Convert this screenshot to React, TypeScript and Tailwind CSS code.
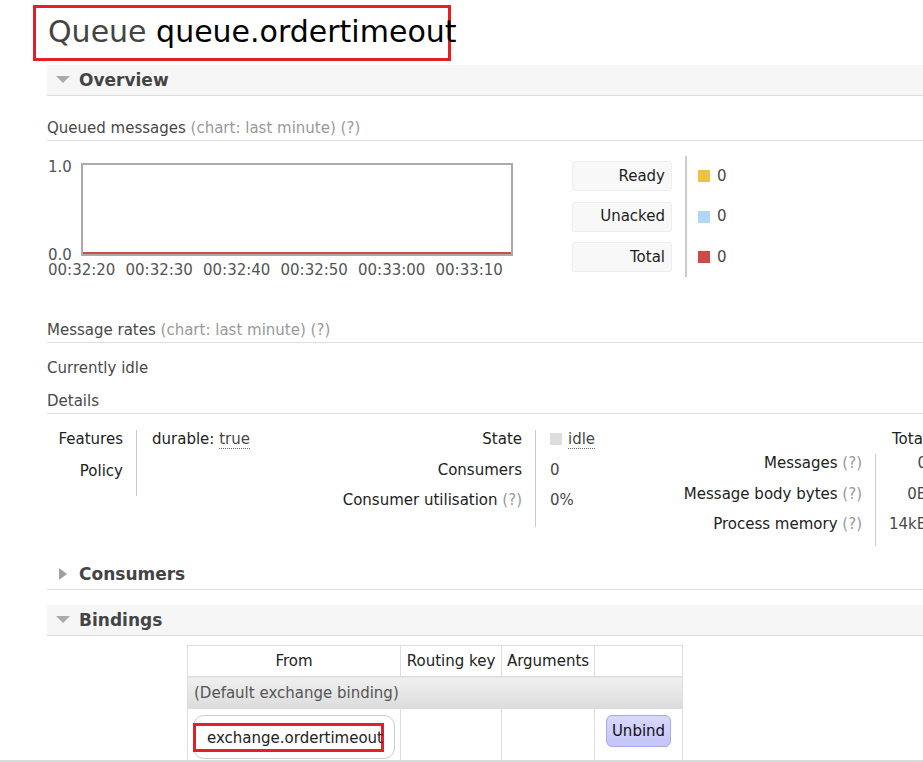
import React from "react";

function Tri({ open }: { open: boolean }) {
  return (
    <div className="w-[32px] flex justify-center">
      {open ? (
        <svg width="14" height="8" viewBox="0 0 14 8">
          <polygon points="0,0 14,0 7,7" fill="#aaa" />
        </svg>
      ) : (
        <svg width="8" height="12" viewBox="0 0 8 12">
          <polygon points="0,0 8,6 0,12" fill="#a0a0a0" />
        </svg>
      )}
    </div>
  );
}

function Section({ title, open, className = "" }: { title: string; open: boolean; className?: string }) {
  return (
    <div
      className={`h-[31px] flex items-center border-b border-[#ddd] ${open ? "bg-[#f6f6f6]" : ""} ${className}`}
    >
      <Tri open={open} />
      <span className="text-[17px] font-bold text-[#444] leading-[20px]">{title}</span>
    </div>
  );
}

function H3({ children, className = "" }: { children: React.ReactNode; className?: string }) {
  return (
    <div className={`leading-[18px] pb-[3px] border-b border-[#ddd] text-[#484848] ${className}`}>{children}</div>
  );
}

const Help = () => <span className="text-[#999]">(?)</span>;

const ticks = ["00:32:20", "00:32:30", "00:32:40", "00:32:50", "00:33:00", "00:33:10"];

const legend = [
  { label: "Ready", color: "bg-[#edc240]" },
  { label: "Unacked", color: "bg-[#afd8f8]" },
  { label: "Total", color: "bg-[#cb4b4b]" },
];

export default function App() {
  return (
    <div className="w-[923px] h-[762px] overflow-hidden flex flex-col bg-white text-[15px] text-[#222] font-['DejaVu_Sans',Verdana,sans-serif]">
      <div className="flex-1 overflow-hidden">
        {/* Title */}
        <div className="ml-[33px] mt-[5px] w-[418px] h-[56px] border-[3px] border-[#e32028] pl-[12px] pt-[6px]">
          <h1 className="text-[30px] leading-[36px] whitespace-nowrap text-[#444]">
            Queue <span className="text-black">queue.ordertimeout</span>
          </h1>
        </div>

        <div className="pl-[47px]">
          <Section title="Overview" open className="mt-[4px]" />

          <H3 className="mt-[23px]">
            Queued messages <span className="text-[#999]">(chart: last minute) (?)</span>
          </H3>

          {/* Chart + legend */}
          <div className="mt-[15px] flex items-start">
            <div className="relative w-[473px] h-[122px] shrink-0 text-[#545454] leading-[14px]">
              <div className="absolute left-[34px] top-[7px] w-[432px] h-[93px] border-2 border-[#aaa] flex flex-col justify-end">
                <div className="h-[2px] bg-[#cb4b4b]" />
              </div>
              <span className="absolute left-[1px] top-[4px]">1.0</span>
              <span className="absolute left-[1px] top-[92px]">0.0</span>
              <div className="absolute left-[1px] top-[107px] flex">
                {ticks.map((t) => (
                  <span key={t} className="w-[77.5px] whitespace-nowrap">
                    {t}
                  </span>
                ))}
              </div>
            </div>

            <div className="ml-[52px] flex">
              <div className="flex flex-col gap-[10.5px] pt-[5px]">
                {legend.map((l) => (
                  <div
                    key={l.label}
                    className="w-[100px] h-[30px] bg-[#f8f8f8] border border-[#eee] rounded-[3px] flex items-center justify-end pr-[6px]"
                  >
                    {l.label}
                  </div>
                ))}
              </div>
              <div className="ml-[13px] w-[2px] h-[121px] bg-[#ccc]" />
              <div className="flex flex-col gap-[10.5px] pt-[5px] pl-[11px]">
                {legend.map((l) => (
                  <div key={l.label} className="h-[30px] flex items-center gap-[7px] text-[#484848]">
                    <span className={`w-[12px] h-[12px] ${l.color}`} />
                    0
                  </div>
                ))}
              </div>
            </div>
          </div>

          <H3 className="mt-[43px]">
            Message rates <span className="text-[#999]">(chart: last minute) (?)</span>
          </H3>
          <p className="mt-[16px] leading-[18px] text-[#484848]">Currently idle</p>
          <H3 className="mt-[15px]">Details</H3>

          {/* Details tables */}
          <div className="mt-[16px] flex items-start leading-[18px]">
            <div className="grid grid-cols-[90px_163px] content-start shrink-0">
              <div className="text-right pr-[13px] pb-[14px] border-r border-[#ccc]">Features</div>
              <div className="pl-[15px] pb-[14px] whitespace-nowrap">
                durable: <span className="text-[#484848] border-b border-dotted border-[#666]">true</span>
              </div>
              <div className="text-right pr-[13px] pb-[16px] border-r border-[#ccc]">Policy</div>
              <div />
            </div>

            <div className="grid grid-cols-[236px_64px] content-start shrink-0">
              <div className="text-right pr-[13px] pb-[13px] border-r border-[#ccc]">State</div>
              <div className="pl-[14px] pb-[13px] whitespace-nowrap">
                <span className="inline-block w-[12px] h-[12px] bg-[#ddd] align-[-1px] mr-[6px]" />
                <span className="text-[#484848] border-b border-dotted border-[#666]">idle</span>
              </div>
              <div className="text-right pr-[13px] pb-[12px] border-r border-[#ccc]">Consumers</div>
              <div className="pl-[14px] pb-[12px] text-[#484848]">0</div>
              <div className="text-right pr-[13px] pb-[18px] border-r border-[#ccc] whitespace-nowrap">
                Consumer utilisation <Help />
              </div>
              <div className="pl-[14px] pb-[18px] text-[#484848]">0%</div>
            </div>

            <div className="grid grid-cols-[275px_62px] content-start shrink-0">
              <div className="pb-[6px]" />
              <div className="pb-[6px] pr-[10px] text-right whitespace-nowrap">Total</div>
              <div className="text-right pr-[13px] pb-[13px] whitespace-nowrap">
                Messages <Help />
              </div>
              <div className="border-l border-[#ccc] pb-[13px] pr-[10px] text-right text-[#484848]">0</div>
              <div className="text-right pr-[13px] pb-[12px] whitespace-nowrap">
                Message body bytes <Help />
              </div>
              <div className="border-l border-[#ccc] pb-[12px] pr-[10px] text-right text-[#484848]">0B</div>
              <div className="text-right pr-[13px] pb-[13px] whitespace-nowrap">
                Process memory <Help />
              </div>
              <div className="border-l border-[#ccc] pb-[13px] pr-[10px] text-right text-[#484848]">14kB</div>
            </div>
          </div>

          <Section title="Consumers" open={false} className="mt-[13px]" />
          <Section title="Bindings" open className="mt-[15px]" />

          {/* Bindings table */}
          <table className="mt-[9px] ml-[140px] border-collapse border border-[#ddd] leading-[18px]">
            <thead>
              <tr className="h-[31px]">
                <th className="w-[213px] font-normal border border-[#ddd] text-center">From</th>
                <th className="w-[101px] font-normal border border-[#ddd] text-center whitespace-nowrap">
                  Routing key
                </th>
                <th className="w-[93px] font-normal border border-[#ddd] text-center">Arguments</th>
                <th className="w-[88px] font-normal border border-[#ddd]" />
              </tr>
            </thead>
            <tbody>
              <tr className="h-[32px]">
                <td
                  colSpan={4}
                  className="pl-[6px] text-[#555] bg-gradient-to-b from-[#f0f0f0] to-[#dcdcdc] border border-[#ddd]"
                >
                  (Default exchange binding)
                </td>
              </tr>
              <tr className="h-[60px] align-top">
                <td className="border border-[#ddd] pl-[5px] pt-[6px]">
                  <div className="w-[202px] h-[44px] border border-[#ccc] rounded-[11px] pt-[7px]">
                    <div className="-ml-[1px] w-[191px] h-[29px] border-[3px] border-[#e32028] pl-[11px] flex items-center whitespace-nowrap">
                      exchange.ordertimeout
                    </div>
                  </div>
                </td>
                <td className="border border-[#ddd]" />
                <td className="border border-[#ddd]" />
                <td className="border border-[#ddd] pl-[11px] pt-[6px]">
                  <button className="w-[65px] h-[32px] rounded-[6px] border border-[#a8a8ee] bg-gradient-to-b from-[#d8d8ff] to-[#c4c4f6] text-[#111] text-[15px]">
                    Unbind
                  </button>
                </td>
              </tr>
            </tbody>
          </table>
        </div>
      </div>
      <div className="h-[2px] bg-[#d6dcdc]" />
    </div>
  );
}
